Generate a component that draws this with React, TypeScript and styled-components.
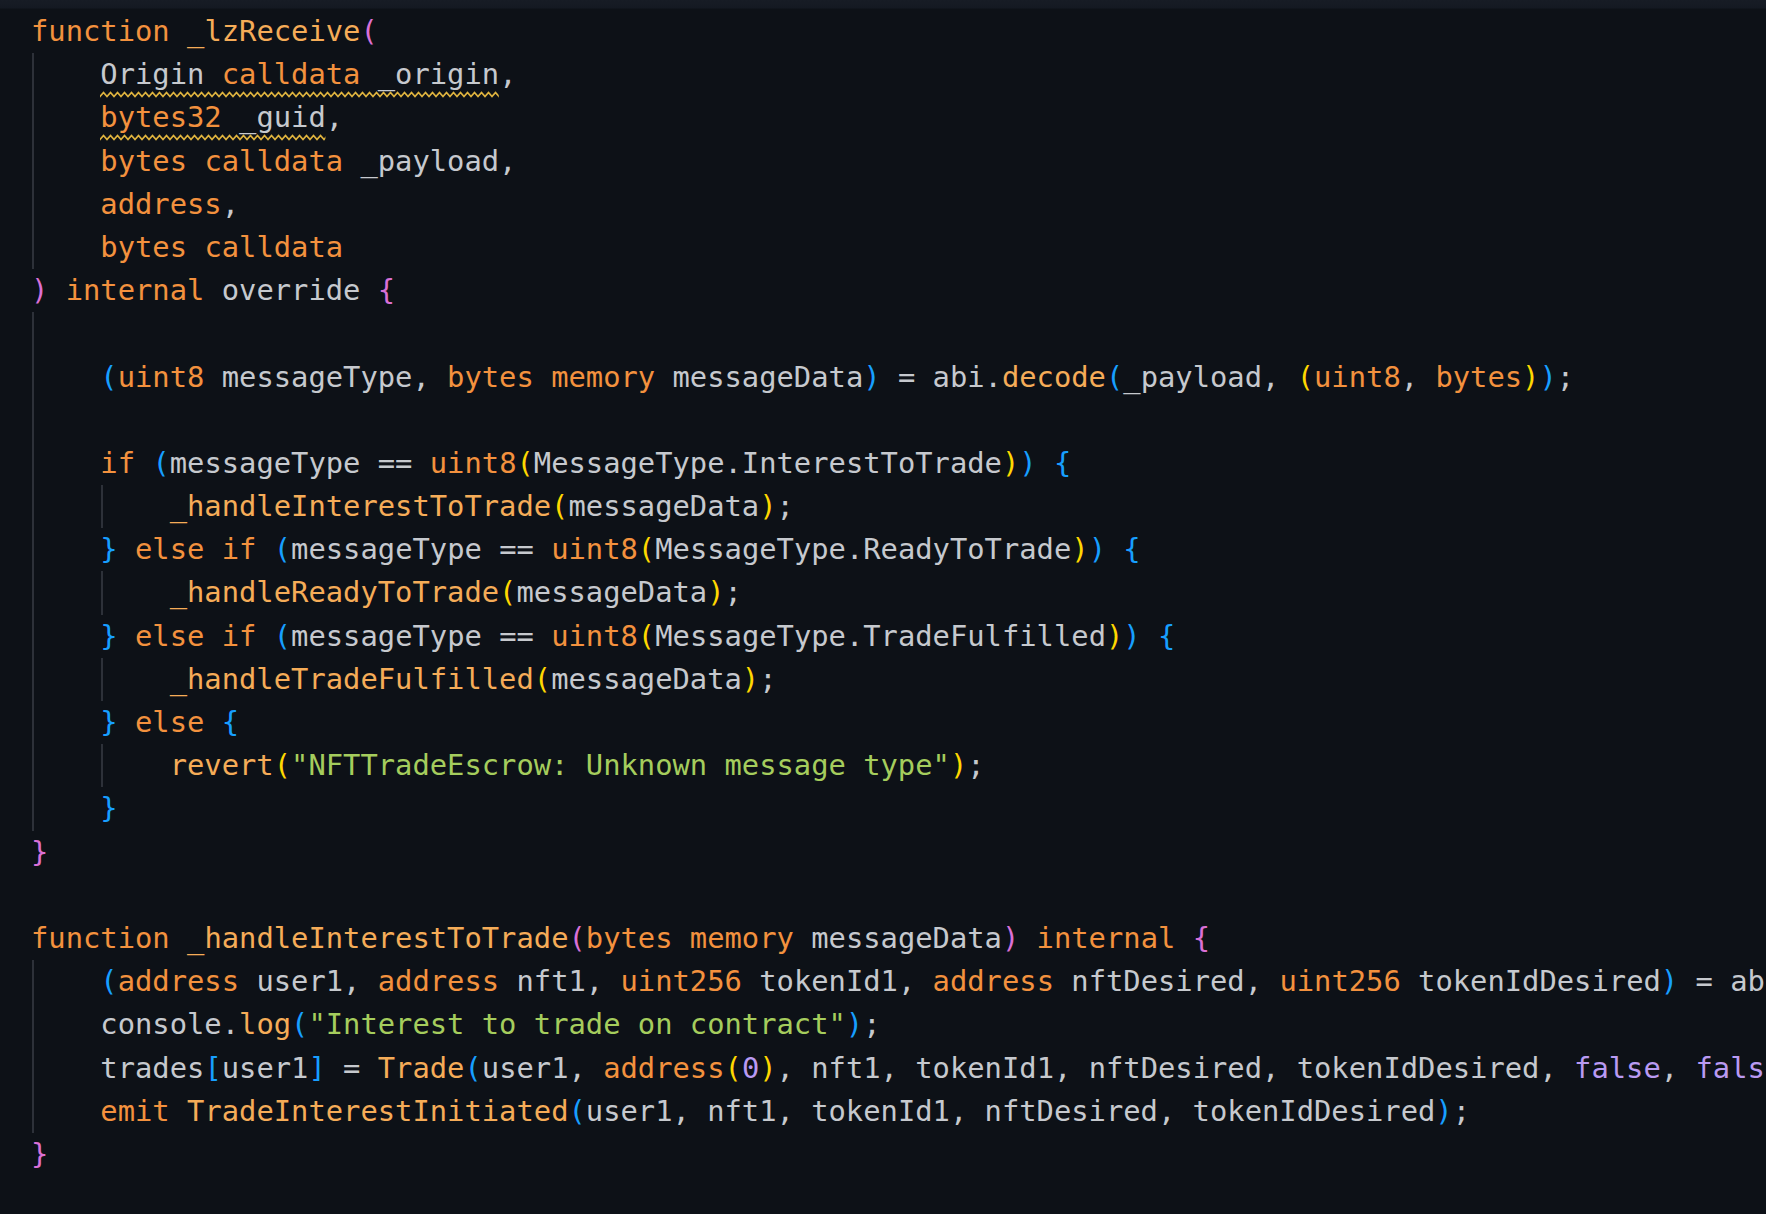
import React, { useId } from "react";
import styled, { createGlobalStyle } from "styled-components";

const GlobalStyle = createGlobalStyle`
  html, body {
    margin: 0;
    padding: 0;
    background: #0d1117;
    overflow: hidden;
  }
`;

const palette: Record<string, string> = {
  d: "#c6c9ce",
  k: "#f3913e",
  f: "#f5ac58",
  s: "#a5cd5d",
  n: "#b99af2",
  "1": "#da70d6",
  "2": "#179fff",
  "3": "#ffd700",
};

const Editor = styled.main`
  width: 1766px;
  height: 1214px;
  box-sizing: border-box;
  padding: 10px 0 0 31px;
  background: linear-gradient(to bottom, #171c25 0, #141922 8px, #0d1117 9px);
  font-family: "DejaVu Sans Mono", "Liberation Mono", monospace;
  font-size: 28.8px;
  line-height: 43.2px;
  color: ${palette.d};
  font-variant-ligatures: none;
  overflow: hidden;
`;

const Row = styled.div`
  display: flex;
  height: 43.2px;
  white-space: pre;
`;

const Indent = styled.span`
  flex: none;
  width: 4ch;
  background: linear-gradient(
    to right,
    transparent 1px,
    #2d3139 1px,
    #2d3139 3px,
    transparent 3px
  );
`;

const CodeText = styled.span`
  white-space: pre;
`;

const Tok = styled.span<{ $c: string }>`
  color: ${(p) => palette[p.$c] ?? palette.d};
`;

const Wavy = styled.span`
  position: relative;
`;

const WavyMark = styled.svg`
  position: absolute;
  left: 0;
  top: 34px;
  width: 100%;
  height: 7px;
  pointer-events: none;
`;

type Line = [number, string, string?];

const lines: Line[] = [
  [0, "⟨k:function⟩ ⟨f:_lzReceive⟩⟨1:(⟩"],
  [1, ",", "Origin ⟨k:calldata⟩ _origin"],
  [1, ",", "⟨k:bytes32⟩ _guid"],
  [1, "⟨k:bytes⟩ ⟨k:calldata⟩ _payload,"],
  [1, "⟨k:address⟩,"],
  [1, "⟨k:bytes⟩ ⟨k:calldata⟩"],
  [0, "⟨1:)⟩ ⟨k:internal⟩ override ⟨1:{⟩"],
  [1, ""],
  [
    1,
    "⟨2:(⟩⟨k:uint8⟩ messageType, ⟨k:bytes⟩ ⟨k:memory⟩ messageData⟨2:)⟩ = abi.⟨f:decode⟩⟨2:(⟩_payload, ⟨3:(⟩⟨k:uint8⟩, ⟨k:bytes⟩⟨3:)⟩⟨2:)⟩;",
  ],
  [1, ""],
  [
    1,
    "⟨k:if⟩ ⟨2:(⟩messageType == ⟨k:uint8⟩⟨3:(⟩MessageType.InterestToTrade⟨3:)⟩⟨2:)⟩ ⟨2:{⟩",
  ],
  [2, "⟨f:_handleInterestToTrade⟩⟨3:(⟩messageData⟨3:)⟩;"],
  [
    1,
    "⟨2:}⟩ ⟨k:else⟩ ⟨k:if⟩ ⟨2:(⟩messageType == ⟨k:uint8⟩⟨3:(⟩MessageType.ReadyToTrade⟨3:)⟩⟨2:)⟩ ⟨2:{⟩",
  ],
  [2, "⟨f:_handleReadyToTrade⟩⟨3:(⟩messageData⟨3:)⟩;"],
  [
    1,
    "⟨2:}⟩ ⟨k:else⟩ ⟨k:if⟩ ⟨2:(⟩messageType == ⟨k:uint8⟩⟨3:(⟩MessageType.TradeFulfilled⟨3:)⟩⟨2:)⟩ ⟨2:{⟩",
  ],
  [2, "⟨f:_handleTradeFulfilled⟩⟨3:(⟩messageData⟨3:)⟩;"],
  [1, "⟨2:}⟩ ⟨k:else⟩ ⟨2:{⟩"],
  [2, '⟨f:revert⟩⟨3:(⟩⟨s:"NFTTradeEscrow: Unknown message type"⟩⟨3:)⟩;'],
  [1, "⟨2:}⟩"],
  [0, "⟨1:}⟩"],
  [0, ""],
  [
    0,
    "⟨k:function⟩ ⟨f:_handleInterestToTrade⟩⟨1:(⟩⟨k:bytes⟩ ⟨k:memory⟩ messageData⟨1:)⟩ ⟨k:internal⟩ ⟨1:{⟩",
  ],
  [
    1,
    "⟨2:(⟩⟨k:address⟩ user1, ⟨k:address⟩ nft1, ⟨k:uint256⟩ tokenId1, ⟨k:address⟩ nftDesired, ⟨k:uint256⟩ tokenIdDesired⟨2:)⟩ = abi.⟨f:decode⟩⟨2:(⟩messageData, ⟨3:(⟩⟨k:address⟩, ⟨k:address⟩, ⟨k:uint256⟩, ⟨k:address⟩, ⟨k:uint256⟩⟨3:)⟩⟨2:)⟩;",
  ],
  [1, 'console.⟨f:log⟩⟨2:(⟩⟨s:"Interest to trade on contract"⟩⟨2:)⟩;'],
  [
    1,
    "trades⟨2:[⟩user1⟨2:]⟩ = ⟨f:Trade⟩⟨2:(⟩user1, ⟨k:address⟩⟨3:(⟩⟨n:0⟩⟨3:)⟩, nft1, tokenId1, nftDesired, tokenIdDesired, ⟨n:false⟩, ⟨n:false⟩⟨2:)⟩;",
  ],
  [
    1,
    "⟨k:emit⟩ ⟨f:TradeInterestInitiated⟩⟨2:(⟩user1, nft1, tokenId1, nftDesired, tokenIdDesired⟨2:)⟩;",
  ],
  [0, "⟨1:}⟩"],
];

function parse(src: string): { c: string; t: string }[] {
  const out: { c: string; t: string }[] = [];
  const re = /⟨(\w):(.*?)⟩/g;
  let last = 0;
  let m: RegExpExecArray | null;
  while ((m = re.exec(src))) {
    if (m.index > last) out.push({ c: "d", t: src.slice(last, m.index) });
    out.push({ c: m[1], t: m[2] });
    last = m.index + m[0].length;
  }
  if (last < src.length) out.push({ c: "d", t: src.slice(last) });
  return out;
}

function Tokens({ src }: { src: string }) {
  return (
    <>
      {parse(src).map((tk, i) => (
        <Tok key={i} $c={tk.c}>
          {tk.t}
        </Tok>
      ))}
    </>
  );
}

function Squiggle({ src }: { src: string }) {
  const id = useId().replace(/:/g, "");
  return (
    <Wavy>
      <Tokens src={src} />
      <WavyMark aria-hidden="true">
        <defs>
          <pattern id={`sq${id}`} width="7" height="7" patternUnits="userSpaceOnUse">
            <path
              d="M-3.5 1.5 L0 5.5 L3.5 1.5 L7 5.5 L10.5 1.5"
              fill="none"
              stroke="#e0b43e"
              strokeWidth="1.8"
            />
          </pattern>
        </defs>
        <rect width="100%" height="7" fill={`url(#sq${id})`} />
      </WavyMark>
    </Wavy>
  );
}

export default function App() {
  return (
    <>
      <GlobalStyle />
      <Editor>
        {lines.map(([indent, src, wavy], i) => (
          <Row key={i}>
            {Array.from({ length: indent }).map((_, j) => (
              <Indent key={j} />
            ))}
            <CodeText>
              {wavy ? <Squiggle src={wavy} /> : null}
              <Tokens src={src} />
            </CodeText>
          </Row>
        ))}
      </Editor>
    </>
  );
}
